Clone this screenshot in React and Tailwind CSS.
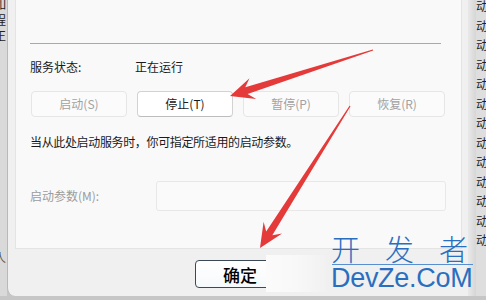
import React from "react";

function arrowPoints(tail, tip, headLen, headHalf, shaftTail, shaftHead) {
  const dx = tip[0] - tail[0];
  const dy = tip[1] - tail[1];
  const len = Math.hypot(dx, dy);
  const ux = dx / len, uy = dy / len;
  const nx = -uy, ny = ux;
  const base = [tip[0] - headLen * ux, tip[1] - headLen * uy];
  const neck = [tip[0] - headLen * 0.72 * ux, tip[1] - headLen * 0.72 * uy];
  const p = (pt, s) => `${(pt[0] + s * nx).toFixed(1)},${(pt[1] + s * ny).toFixed(1)}`;
  return [
    `${tip[0]},${tip[1]}`,
    p(base, headHalf),
    p(neck, shaftHead),
    p(tail, shaftTail),
    p(tail, -shaftTail),
    p(neck, -shaftHead),
    p(base, -headHalf),
  ].join(" ");
}

function Btn({ children, enabled }) {
  return (
    <div
      className={
        enabled
          ? "w-[96px] h-[26px] rounded-[4px] border border-[#d2d2d2] border-b-[#bdbdbd] bg-white flex items-center justify-center text-[12px] text-[#1b1b1b]"
          : "w-[96px] h-[26px] rounded-[4px] border border-[#e6e6e6] bg-[#fbfbfb] flex items-center justify-center text-[12px] text-[#a2a2a2]"
      }
    >
      {children}
    </div>
  );
}

export default function App() {
  const rightChars = Array.from({ length: 13 });
  return (
    <div className="relative w-[486px] h-[300px] overflow-hidden bg-[#c6c6c6] font-['Noto_Sans_CJK_SC',sans-serif]">
      <div className="flex h-[296px]">
        {/* left background strip */}
        <div className="w-[7px] h-full bg-[#d9d9d9] overflow-hidden flex flex-col text-[12px] leading-[16px] text-[#222]">
          <div className="-ml-[6px] -mt-[4px]">如</div>
          <div className="-ml-[6px]">程</div>
          <div className="-ml-[6px]">正</div>
          <div className="-ml-[6px] mt-[206px] text-[#555]">人</div>
        </div>

        {/* dialog */}
        <div className="w-[461px] h-full bg-[#f0f0f0] border-l border-[#b8b8b8] rounded-bl-[8px] flex flex-col">
          <div className="ml-[7px] w-[447px] h-[249px] bg-[#f9f9f9] border-l border-r border-b border-[#e4e4e4] pl-[14px] pt-[43px] flex flex-col">
            <div className="w-[411px] h-px bg-[#a9a9a9]" />
            <div className="mt-[15px] flex h-4 leading-4 text-[12px] text-[#1a1a1a]">
              <div className="w-[105px]">服务状态:</div>
              <div>正在运行</div>
            </div>
            <div className="mt-[16px] ml-px flex gap-[10px]">
              <Btn>启动(S)</Btn>
              <Btn enabled>停止(T)</Btn>
              <Btn>暂停(P)</Btn>
              <Btn>恢复(R)</Btn>
            </div>
            <div className="mt-[17px] h-4 leading-4 text-[12px] text-[#1a1a1a] tracking-[-0.35px] whitespace-nowrap">
              当从此处启动服务时，你可指定所适用的启动参数。
            </div>
            <div className="mt-[31px] flex items-center h-[30px]">
              <div className="w-[126px] text-[12px] text-[#9c9c9c]">启动参数(M):</div>
              <div className="w-[290px] h-[30px] rounded-[3px] border border-[#e8e8e8] bg-[#fafafa]" />
            </div>
          </div>
          <div className="pt-[11px] pl-[187px]">
            <div className="w-[90px] h-[28px] rounded-[4px] border border-[#3b4956] bg-gradient-to-b from-white to-[#f6f9fb] flex items-center justify-center text-[17px] font-medium text-black leading-none">
              确定
            </div>
          </div>
        </div>

        {/* shadow */}
        <div className="w-[8px] h-full bg-gradient-to-r from-[#e9e9e9] to-[#d6d6d6]" />

        {/* right background strip */}
        <div className="w-[10px] h-full bg-[#dedede] flex flex-col">
          <div className="h-[246px] overflow-hidden text-[12px] leading-[19.5px] text-[#222]">
            <div className="-mt-[4px] flex flex-col">
              {rightChars.map((_, i) => (
                <div key={i}>动</div>
              ))}
            </div>
          </div>
        </div>
      </div>

      {/* white fade over button right side */}
      <div className="absolute left-[266px] top-[255px] w-[60px] h-[37px] bg-gradient-to-r from-[#fbfbfb] via-[#f8f8f8] to-[#f1f1f1]" />

      {/* watermark */}
      <div className="absolute left-[331px] top-[234px] flex gap-[25px] text-[29px] leading-none font-light text-[#2a6fbf]">
        <span>开</span>
        <span>发</span>
        <span>者</span>
      </div>
      <div className="absolute left-[332px] top-[264px] w-[141px] h-px bg-[#5a8fcf]" />
      <div className="absolute left-[331px] top-[265px] font-['Liberation_Sans',sans-serif] text-[27px] leading-none text-[#2a6fbf] tracking-[-0.3px]">
        DevZe.CoM
      </div>

      {/* arrows */}
      <svg className="absolute left-0 top-0" width="486" height="300" viewBox="0 0 486 300">
        <polygon points={arrowPoints([373, 50], [230, 96], 24, 11, 0.6, 3.6)} fill="#e53a3a" />
        <polygon points={arrowPoints([350, 106], [260, 248], 24, 11, 0.6, 3.6)} fill="#e53a3a" />
      </svg>
    </div>
  );
}
